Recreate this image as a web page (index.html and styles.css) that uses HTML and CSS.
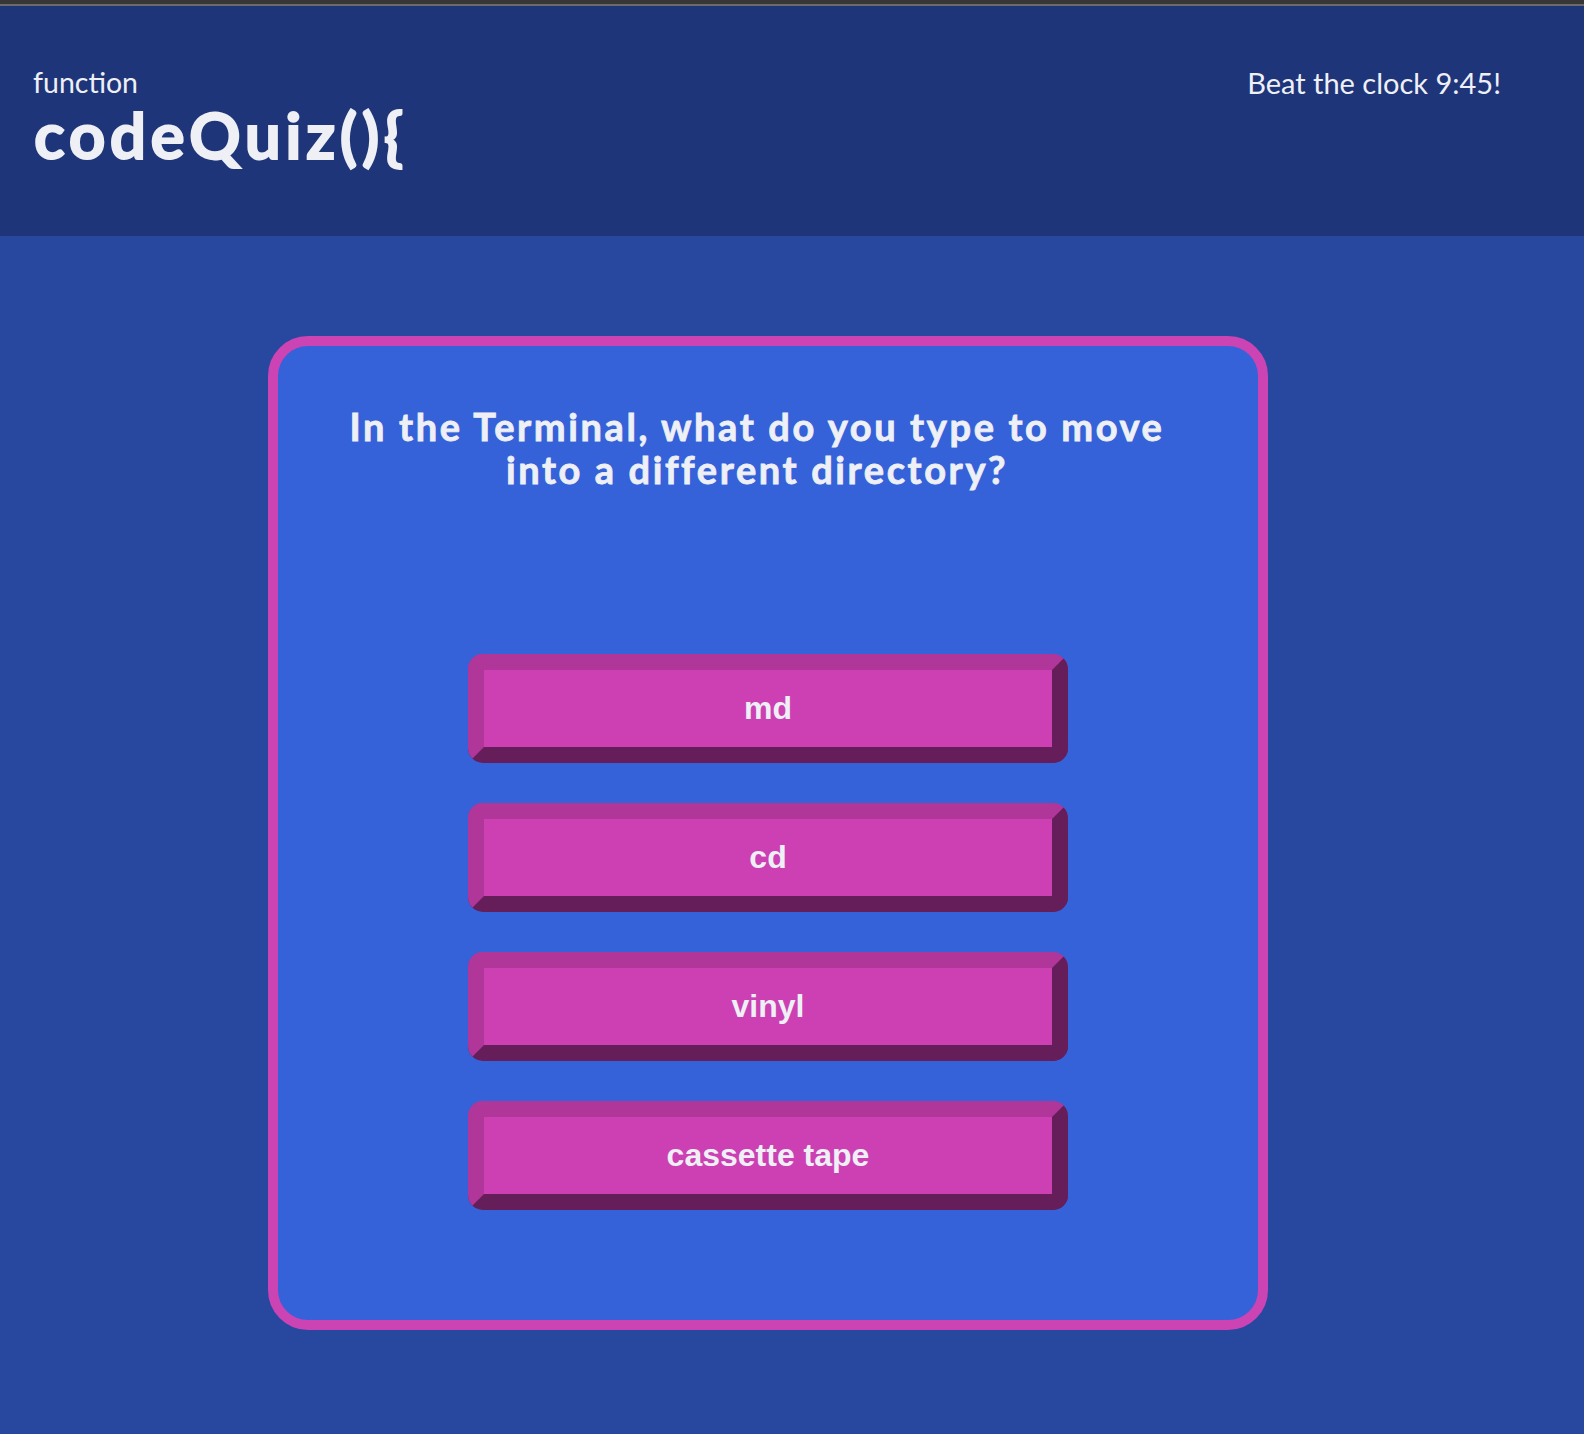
FILE: index.html
```html
<!DOCTYPE html>
<html lang="en">
<head>
<meta charset="utf-8">
<title>codeQuiz</title>
<link rel="stylesheet" href="styles.css">
</head>
<body>
<div class="chrome"></div>
<header class="site-header">
  <div class="brand">
    <div class="brand-small">function</div>
    <div class="brand-large">codeQuiz(){</div>
  </div>
  <div class="timer">Beat the clock 9:45!</div>
</header>
<main class="stage">
  <section class="card">
    <h2 class="question">In the Terminal, what do you type to move into a different directory?</h2>
    <div class="answers">
      <button class="answer">md</button>
      <button class="answer">cd</button>
      <button class="answer">vinyl</button>
      <button class="answer">cassette tape</button>
    </div>
  </section>
</main>
</body>
</html>
```
FILE: styles.css
```css
html, body {
  margin: 0;
  padding: 0;
}
body {
  background: #28489f;
  color: #eef0f5;
  font-family: "Lato", "Open Sans", sans-serif;
  min-height: 1434px;
}
.chrome {
  height: 4px;
  background: #373737;
  border-bottom: 2px solid #6b6b6b;
}
.site-header {
  background: #1f3579;
  height: 230px;
  box-sizing: border-box;
  padding: 58px 83px 0 33px;
  display: flex;
  justify-content: space-between;
  align-items: flex-start;
}
.brand-small {
  font-size: 28.5px;
  line-height: 36px;
}
.brand-large {
  font-size: 64px;
  line-height: 70px;
  font-weight: 700;
  letter-spacing: 4.4px;
  -webkit-text-stroke: 1.8px currentColor;
  margin-left: 1px;
}
.timer {
  font-size: 29px;
  line-height: 36px;
  padding-top: 1px;
}
.stage {
  padding: 100px 48px 0 0;
}
.card {
  box-sizing: border-box;
  width: 1000px;
  height: 994px;
  margin: 0 auto;
  background: #3562d8;
  border: 10px solid #cc44b4;
  border-radius: 40px;
  padding: 59px 82px 0 60px;
}
.question {
  margin: 0;
  font-size: 38px;
  line-height: 43px;
  font-weight: 700;
  letter-spacing: 2.6px;
  -webkit-text-stroke: 0.8px currentColor;
  text-align: center;
}
.answers {
  margin-top: 163px;
  display: flex;
  flex-direction: column;
  align-items: center;
  gap: 40px;
  margin-right: -22px;
}
.answer {
  box-sizing: border-box;
  width: 600px;
  height: 109px;
  border: 16px solid;
  border-color: #b0369a #661e5a #661e5a #b0369a;
  border-radius: 15px;
  background: #cc40b4;
  color: #eef0f5;
  font-family: "Liberation Sans", Arial, sans-serif;
  font-weight: 700;
  font-size: 32px;
  padding: 0;
  cursor: pointer;
}
```
